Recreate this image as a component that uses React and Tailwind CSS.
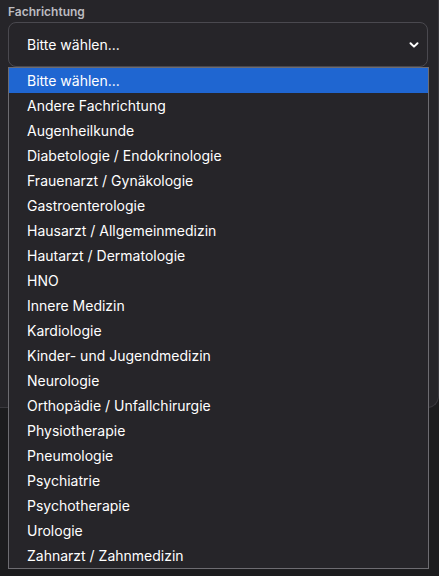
import React from 'react';

const options = [
  'Bitte wählen...',
  'Andere Fachrichtung',
  'Augenheilkunde',
  'Diabetologie / Endokrinologie',
  'Frauenarzt / Gynäkologie',
  'Gastroenterologie',
  'Hausarzt / Allgemeinmedizin',
  'Hautarzt / Dermatologie',
  'HNO',
  'Innere Medizin',
  'Kardiologie',
  'Kinder- und Jugendmedizin',
  'Neurologie',
  'Orthopädie / Unfallchirurgie',
  'Physiotherapie',
  'Pneumologie',
  'Psychiatrie',
  'Psychotherapie',
  'Urologie',
  'Zahnarzt / Zahnmedizin',
];

export default function App() {
  return (
    <div className="relative min-h-[576px] w-[439px] bg-[#1c1c1e] font-['Inter','Noto_Sans',sans-serif] text-white">
      <div className="h-[408px] rounded-br-xl border-b border-r border-[#3a393e] bg-[#262529] px-2 pt-[4px]">
        <label className="block text-[12px] font-semibold leading-[16px] text-[#bdbcc1]">Fachrichtung</label>
        <div className="mt-[2px] flex h-[45px] w-[420px] items-center justify-between rounded-lg border border-[#4a494f] pl-[18px] pr-[8px]">
          <span className="text-[14px] leading-none">Bitte wählen...</span>
          <svg width="10" height="10" viewBox="0 0 10 10" fill="none">
            <path d="M1.5 3.2 L5 6.6 L8.5 3.2" stroke="#ffffff" strokeWidth="2" strokeLinecap="round" strokeLinejoin="round" />
          </svg>
        </div>
      </div>

      <ul className="absolute left-2 top-[67px] w-[421px] border border-[#6d6c71] bg-[#262529]">
        {options.map((o, i) => (
          <li
            key={o}
            className={
              i === 0
                ? 'flex h-[25px] items-center bg-[#1f66d1] pl-[18px] text-[14px] text-white'
                : 'flex h-[25px] items-center pl-[18px] text-[14px] text-white'
            }
          >
            {o}
          </li>
        ))}
      </ul>
    </div>
  );
}
